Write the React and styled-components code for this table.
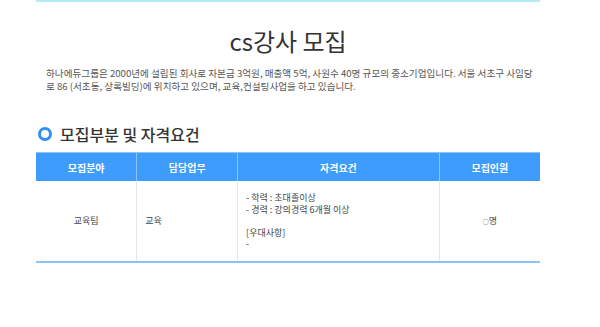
import styled, { createGlobalStyle } from "styled-components";

const GlobalStyle = createGlobalStyle`
  html, body {
    margin: 0;
    padding: 0;
    background: #fff;
  }
  body {
    font-family: "Noto Sans CJK KR", "Noto Sans", sans-serif;
    color: #333;
  }
`;

const Page = styled.div`
  padding-left: 36px;
  width: 504px;
`;

const Section = styled.section`
  border-top: 2px solid #b3eaf6;
`;

const Title = styled.h1`
  margin: 24px 0 0;
  font-size: 24px;
  line-height: 30px;
  font-weight: 400;
  text-align: center;
  color: #333;
`;

const Intro = styled.p`
  margin: 11px 0 0;
  padding: 0 6px 0 10px;
  font-size: 9.6px;
  line-height: 13px;
  color: #555;
`;

const Heading = styled.h2`
  display: flex;
  align-items: center;
  gap: 8px;
  margin: 31px 0 0;
  padding-left: 2px;
  font-size: 16px;
  line-height: 20px;
  font-weight: 500;
  color: #333;
`;

const Ring = styled.span`
  width: 8px;
  height: 8px;
  border: 3px solid #2f8ff2;
  border-radius: 50%;
`;

const Table = styled.table`
  width: 100%;
  margin-top: 8px;
  border-collapse: collapse;
  table-layout: fixed;
  border-bottom: 2px solid #8cc3f5;
`;

const Th = styled.th`
  height: 28px;
  padding: 0;
  background: #3d9cfd;
  color: #fff;
  font-size: 10px;
  font-weight: 700;
  border-left: 1px solid #8cc6ff;
  border-top: 1px solid #8cc6ff;
  &:first-child {
    border-left: 0;
  }
`;

const Td = styled.td`
  height: 80px;
  padding: 0 8px;
  font-size: 9px;
  line-height: 11.5px;
  color: #444;
  text-align: ${(p) => p.$align || "center"};
  vertical-align: middle;
  border-left: 1px solid #e6e6e6;
  &:first-child {
    border-left: 0;
  }
`;

const Lines = styled.div`
  white-space: pre-line;
`;

const SmallMark = styled.span`
  font-size: 6px;
`;

export default function App() {
  const requirements = "- 학력 : 초대졸이상\n- 경력 : 강의경력 6개월 이상\n\n[우대사항]\n-";

  return (
    <>
      <GlobalStyle />
      <Page>
        <Section>
          <Title>cs강사 모집</Title>
          <Intro>
            하나에듀그룹은 2000년에 설립된 회사로 자본금 3억원, 매출액 5억, 사원수 40명 규모의
            중소기업입니다. 서울 서초구 사임당로 86 (서초동, 상록빌딩)에 위치하고 있으며,
            교육,컨설팅사업을 하고 있습니다.
          </Intro>
          <Heading>
            <Ring />
            모집부분 및 자격요건
          </Heading>
          <Table>
            <colgroup>
              <col style={{ width: "20%" }} />
              <col style={{ width: "20%" }} />
              <col style={{ width: "40%" }} />
              <col style={{ width: "20%" }} />
            </colgroup>
            <thead>
              <tr>
                <Th>모집분야</Th>
                <Th>담당업무</Th>
                <Th>자격요건</Th>
                <Th>모집인원</Th>
              </tr>
            </thead>
            <tbody>
              <tr>
                <Td>교육팀</Td>
                <Td $align="left">교육</Td>
                <Td $align="left">
                  <Lines>{requirements}</Lines>
                </Td>
                <Td>
                  <SmallMark>○</SmallMark>명
                </Td>
              </tr>
            </tbody>
          </Table>
        </Section>
      </Page>
    </>
  );
}
